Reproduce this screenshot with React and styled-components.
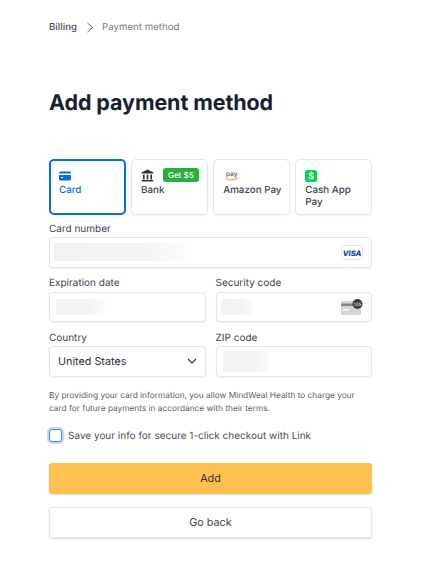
import React from 'react';
import styled, { createGlobalStyle } from 'styled-components';

const GlobalStyle = createGlobalStyle`
    html, body {
        margin: 0;
        padding: 0;
        background: #fff;
    }
    * {
        box-sizing: border-box;
    }
    body {
        font-family: 'Inter', 'Liberation Sans', sans-serif;
        color: #30313d;
        text-rendering: geometricPrecision;
    }
`;

const Page = styled.div`
    width: 424px;
    height: 567px;
    padding: 21px 52px 0 49px;
    overflow: hidden;
`;

const Crumbs = styled.nav`
    display: flex;
    align-items: center;
    height: 14px;
    font-size: 9.7px;
    line-height: 14px;
`;

const Crumb = styled.span`
    color: ${p => (p.$current ? '#7a7e8a' : '#4a4e5e')};
    font-weight: ${p => (p.$current ? 400 : 500)};
`;

const CrumbArrow = styled.svg`
    width: 8px;
    height: 11px;
    margin: -1px 8px 0 9px;
`;

const Title = styled.h1`
    margin: 52px 0 0;
    font-size: 21.5px;
    line-height: 32px;
    font-weight: 700;
    letter-spacing: -0.1px;
    color: #1a1f36;
`;

const Tabs = styled.div`
    display: grid;
    grid-template-columns: repeat(4, 76.5px);
    column-gap: 5.6px;
    margin-top: 40px;
`;

const Tab = styled.div`
    position: relative;
    height: 56px;
    padding: ${p => (p.$active ? '8px 4px 0 8px' : '9px 4px 0 9px')};
    border-radius: 5px;
    border: ${p => (p.$active ? '2px solid #0570de' : '1px solid #e6e6e6')};
    box-shadow: 0 1px 2px rgba(0, 0, 0, 0.07);
    color: ${p => (p.$active ? '#0570de' : '#3f4150')};
    font-size: 9.8px;
    font-weight: 500;
    line-height: 11.5px;
    background: #fff;
`;

const TabIcon = styled.div`
    height: 13px;
    margin-bottom: 3px;
    display: flex;
    align-items: center;
`;

const Badge = styled.span`
    position: absolute;
    top: 8px;
    right: 8px;
    padding: 0 5px;
    height: 14px;
    border-radius: 3px;
    background: #27ae3c;
    color: #fff;
    font-size: 8px;
    line-height: 14px;
    font-weight: 500;
`;

const Form = styled.div`
    display: flex;
    flex-direction: column;
    gap: 2px;
`;

const Row = styled.div`
    display: grid;
    grid-template-columns: ${p => p.$columns || '1fr'};
    column-gap: 9.5px;
`;

const Field = styled.div`
    display: flex;
    flex-direction: column;
`;

const Label = styled.label`
    height: 22px;
    padding-top: 6.5px;
    font-size: 10px;
    line-height: 14px;
    color: #3f4150;
`;

const Input = styled.div`
    display: flex;
    align-items: center;
    justify-content: space-between;
    height: 30.5px;
    padding: 0 8px;
    border: 1px solid #e6e6e6;
    border-radius: 4px;
    box-shadow: 0 1px 2px rgba(0, 0, 0, 0.06);
    background: #fff;
`;

const Blur = styled.div`
    width: ${p => p.$width}px;
    height: ${p => p.$height}px;
    margin-left: ${p => p.$left || 0}px;
    border-radius: 2px;
    background: linear-gradient(90deg, #f3f3f3 0%, #f4f4f4 70%, #fbfbfb 100%);
`;

const SelectValue = styled.span`
    font-size: 10.8px;
    color: #30313d;
`;

const Notice = styled.p`
    margin: 13.5px 0 0;
    font-size: 8.3px;
    line-height: 13px;
    color: #5a5d6b;
`;

const CheckRow = styled.div`
    display: flex;
    align-items: center;
    gap: 6px;
    margin-top: 11.5px;
    height: 16px;
    font-size: 10px;
    color: #4a4c5a;
`;

const CheckBox = styled.span`
    width: 13px;
    height: 13px;
    border-radius: 3px;
    border: 1px solid #4f80c4;
    box-shadow: 0 0 0 2px rgba(5, 112, 222, 0.25);
    background: #fff;
`;

const Button = styled.button`
    display: block;
    width: 100%;
    height: 31px;
    border-radius: 3px;
    font-family: inherit;
    font-size: 10.8px;
    font-weight: 400;
    color: ${p => (p.$primary ? '#30313d' : '#3f4150')};
    border: ${p => (p.$primary ? 'none' : '1px solid #e6e6e6')};
    background: ${p => (p.$primary ? '#ffc04d' : '#fff')};
    box-shadow: 0 1px 2px rgba(0, 0, 0, 0.14);
    margin-top: ${p => p.$top}px;
`;

const CardIcon = () => (
    <svg width="12" height="10" viewBox="0 0 12 10">
        <rect width="12" height="9" y="0.5" rx="1.5" fill="#0570de" />
        <rect width="12" height="1.5" y="2.5" fill="#fff" />
        <rect x="2" y="6" width="2" height="1" fill="#fff" />
    </svg>
);

const BankIcon = () => (
    <svg width="13" height="13" viewBox="0 0 13 13">
        <path d="M6.5 0.5 L12.5 3.5 V4.6 H0.5 V3.5 Z" fill="#30313d" />
        <path d="M2 5.5h1.6v5H2zM5.7 5.5h1.6v5H5.7zM9.4 5.5H11v5H9.4z" fill="#30313d" />
        <path d="M0.8 11h11.4v1.5H0.8z" fill="#30313d" />
    </svg>
);

const AmazonIcon = () => (
    <svg width="18" height="13" viewBox="0 0 18 13">
        <rect width="18" height="13" fill="#fbfbfb" />
        <text x="3" y="7" fontSize="6.5" fontFamily="Inter, sans-serif" fill="#555">pay</text>
        <path d="M2.5 9 C6 11.4 10 11.4 13.5 9.4" stroke="#f39c1f" strokeWidth="1" fill="none" />
        <path d="M12.5 9 L14.5 8.9 L13.8 10.6" stroke="#f39c1f" strokeWidth="0.7" fill="none" />
    </svg>
);

const CashIcon = () => (
    <svg width="12" height="12" viewBox="0 0 12 12">
        <rect width="12" height="12" rx="2.5" fill="#00d64f" />
        <text x="6" y="9.4" textAnchor="middle" fontSize="9" fontWeight="700" fontFamily="Inter, sans-serif" fill="#fff">$</text>
    </svg>
);

const VisaIcon = () => (
    <svg width="22" height="15" viewBox="0 0 22 15">
        <rect x="0.5" y="0.5" width="21" height="14" rx="1.5" fill="#fff" stroke="#e8e8e8" />
        <text x="11" y="10.5" textAnchor="middle" fontSize="7.5" fontStyle="italic" fontWeight="800" fontFamily="Inter, sans-serif" fill="#1a37b0">VISA</text>
    </svg>
);

const CvcIcon = () => (
    <svg width="22" height="16" viewBox="0 0 22 16">
        <rect x="0" y="2" width="20" height="14" rx="1.5" fill="#d4d4d6" />
        <rect x="0" y="4.5" width="20" height="2.5" fill="#85868c" />
        <rect x="2" y="10" width="6" height="1.5" fill="#fff" />
        <circle cx="16.5" cy="5" r="5" fill="#3a3c48" />
        <text x="16.5" y="6.8" textAnchor="middle" fontSize="4.5" fontFamily="Inter, sans-serif" fill="#fff">135</text>
    </svg>
);

const App = () => {
    return (
        <Page>
            <GlobalStyle />
            <Crumbs>
                <Crumb>Billing</Crumb>
                <CrumbArrow viewBox="0 0 8 11">
                    <path d="M1.5 1 L6.5 5.5 L1.5 10" stroke="#5a5d6b" strokeWidth="1" fill="none" />
                </CrumbArrow>
                <Crumb $current>Payment method</Crumb>
            </Crumbs>
            <Title>Add payment method</Title>
            <Tabs>
                <Tab $active>
                    <TabIcon><CardIcon /></TabIcon>
                    Card
                </Tab>
                <Tab>
                    <TabIcon><BankIcon /></TabIcon>
                    <Badge>Get $5</Badge>
                    Bank
                </Tab>
                <Tab>
                    <TabIcon><AmazonIcon /></TabIcon>
                    Amazon Pay
                </Tab>
                <Tab>
                    <TabIcon><CashIcon /></TabIcon>
                    Cash App Pay
                </Tab>
            </Tabs>
            <Form>
                <Row>
                    <Field>
                        <Label>Card number</Label>
                        <Input>
                            <Blur $width={131} $height={18} $left={-4} />
                            <VisaIcon />
                        </Input>
                    </Field>
                </Row>
                <Row $columns="157px 156.5px">
                    <Field>
                        <Label>Expiration date</Label>
                        <Input>
                            <Blur $width={49} $height={16} $left={-2} />
                        </Input>
                    </Field>
                    <Field>
                        <Label>Security code</Label>
                        <Input>
                            <Blur $width={31} $height={16} $left={-4} />
                            <CvcIcon />
                        </Input>
                    </Field>
                </Row>
                <Row $columns="157px 156.5px">
                    <Field>
                        <Label>Country</Label>
                        <Input>
                            <SelectValue>United States</SelectValue>
                            <svg width="10" height="6" viewBox="0 0 10 6">
                                <path d="M1 1 L5 5 L9 1" stroke="#30313d" strokeWidth="1.2" fill="none" />
                            </svg>
                        </Input>
                    </Field>
                    <Field>
                        <Label>ZIP code</Label>
                        <Input>
                            <Blur $width={46} $height={21} $left={-2} />
                        </Input>
                    </Field>
                </Row>
            </Form>
            <Notice>
                By providing your card information, you allow MindWeal Health to charge your
                card for future payments in accordance with their terms.
            </Notice>
            <CheckRow>
                <CheckBox />
                Save your info for secure 1-click checkout with Link
            </CheckRow>
            <Button $primary $top={19}>Add</Button>
            <Button $top={13}>Go back</Button>
        </Page>
    );
};

export default App;
